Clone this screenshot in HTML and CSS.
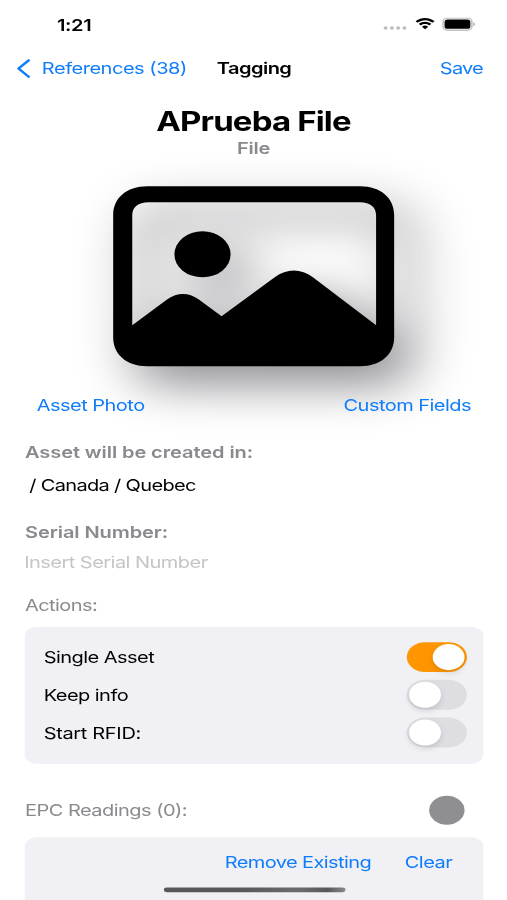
FILE: index.html
```html
<!DOCTYPE html>
<html lang="en">
<head>
<meta charset="utf-8">
<title>Tagging</title>
<link rel="stylesheet" href="styles.css">
</head>
<body>
<main class="screen">
  <header class="status">
    <span class="time">1:21</span>
    <span class="indicators">
      <svg class="cell" viewBox="0 0 20 4"><g fill="#bdbdbf"><circle cx="2" cy="2" r="1.7"/><circle cx="7.4" cy="2" r="1.7"/><circle cx="12.7" cy="2" r="1.7"/><circle cx="18" cy="2" r="1.7"/></g></svg>
      <svg class="wifi" viewBox="0 0 17 12"><path d="M8.5 2.4c2.3 0 4.5.9 6.2 2.5.1.1.3.1.4 0l1.200-1.200a.35.35 0 0 0 0-.5C11.900-1 5.100-1 .7 3.200a.35.35 0 0 0 0 .5l1.200 1.200c.1.1.3.1.4 0C4 3.300 6.200 2.400 8.500 2.400zM8.500 6.300c1.300 0 2.500.5 3.400 1.300.1.1.4.1.5 0l1.200-1.200a.35.35 0 0 0 0-.5 7.500 7.500 0 0 0-10.200 0 .35.35 0 0 0 0 .5l1.200 1.200c.1.100.4.100.5 0 .9-.800 2.100-1.300 3.400-1.300zM10.900 8.900a.35.35 0 0 1 0 .5l-2.100 2.200a.4.4 0 0 1-.6 0L6.100 9.400a.35.35 0 0 1 0-.5 3.700 3.700 0 0 1 4.800 0z"/></svg>
      <svg class="battery" viewBox="0 0 28 13" preserveAspectRatio="none"><rect x=".7" y=".7" width="24.100" height="11.600" rx="3.800" fill="none" stroke="#c2c2c4" stroke-width="1.400"/><path d="M26 4.600v4c.9-.3 1.500-1.100 1.500-2s-.6-1.700-1.500-2z" fill="#b9b9bb"/><rect x="2" y="2" width="21.500" height="9" rx="2.500"/></svg>
    </span>
  </header>

  <nav class="nav">
    <a class="back"><svg class="chevron" viewBox="0 0 12 20"><path d="M10.300 1.500 1.700 10l8.600 8.500"/></svg><span>References (38)</span></a>
    <span class="nav-title">Tagging</span>
    <a class="save">Save</a>
  </nav>

  <h1 class="title">APrueba File</h1>
  <p class="subtitle">File</p>

  <svg class="photo" viewBox="0 0 280 180" preserveAspectRatio="none">
    <path fill-rule="evenodd" d="M34 0H246C267 0 280 12 280 29V151C280 168 267 180 246 180H34C13 180 0 168 0 151V29C0 12 13 0 34 0ZM35 16C25 16 19 21 19 29V139L54 113C64 106 75 106 85 113L108 130L161 91C173 82 187 82 199 91L262 139V29C262 21 256 16 246 16Z"/>
    <ellipse cx="89" cy="68" rx="28" ry="23"/>
  </svg>

  <div class="links"><a>Asset Photo</a><a>Custom Fields</a></div>

  <p class="label created">Asset will be created in:</p>
  <p class="path">/ Canada / Quebec</p>
  <p class="label serial">Serial Number:</p>
  <p class="placeholder">Insert Serial Number</p>
  <p class="section">Actions:</p>

  <section class="card actions">
    <div class="row"><span>Single Asset</span><i class="switch on"></i></div>
    <div class="row"><span>Keep info</span><i class="switch"></i></div>
    <div class="row"><span class="rfid">Start RFID:</span><i class="switch"></i></div>
  </section>

  <div class="readings"><span>EPC Readings (0):</span><i class="dot"></i></div>

  <section class="card footer">
    <a class="remove">Remove Existing</a><a>Clear</a>
  </section>
  <div class="home"></div>
</main>
</body>
</html>
```

FILE: styles.css
```css
* { box-sizing: border-box; }
html, body { margin: 0; width: 507px; height: 900px; overflow: hidden; background: #fff; }
p, h1 { margin: 0; }

/* A 430 x 932 point canvas stretched over the window. */
.screen {
  position: relative;
  display: flex;
  flex-direction: column;
  width: 430px;
  height: 932px;
  overflow: hidden;
  transform: scale(1.17907, 0.96567);
  transform-origin: 0 0;
  font: 400 17px/22px Inter, "Liberation Sans", sans-serif;
  letter-spacing: -0.47px;
  color: #000;
  white-space: nowrap;
}
a { color: #0f7cfb; }

.status { display: flex; justify-content: space-between; align-items: center; height: 51px; padding: 0 27px 0 48.3px; }
.time { font-weight: 600; letter-spacing: -0.3px; }
.indicators { display: flex; align-items: center; margin-bottom: 1.2px; }
.cell { width: 20px; height: 4px; margin: 8.5px 7px 0 0; }
.wifi { width: 17px; height: 13px; margin-right: 5.5px; }
.battery { width: 28.5px; height: 14px; }

.nav { display: grid; grid-template-columns: 169.9px auto 1fr; align-items: center; height: 39px; padding: 0 20.4px 0 14px; }
.back { display: flex; align-items: center; gap: 9.5px; letter-spacing: -0.42px; }
.chevron { width: 12px; height: 20px; fill: none; stroke: #0f7cfb; stroke-width: 2.3; stroke-linecap: round; stroke-linejoin: round; }
.nav-title { font-weight: 600; }
.save { justify-self: end; letter-spacing: -0.7px; }

.title { margin-top: 17.5px; height: 36px; text-align: center; font-size: 28px; line-height: 36px; font-weight: 700; letter-spacing: -0.72px; }
.subtitle { height: 18px; line-height: 18px; text-align: center; font-weight: 600; color: #8a8a8e; letter-spacing: -0.2px; }

.photo { width: 238.3px; height: 186.4px; margin: 31px 0 0 95.8px; overflow: visible; filter: drop-shadow(17px 20px 23px #8e8e93); }
.links { position: relative; display: flex; justify-content: space-between; margin-top: 29.8px; padding: 0 30.5px 0 31.2px; }

.label { font-weight: 600; color: #8a8a8e; padding-left: 21.2px; letter-spacing: -0.08px; }
.created { margin-top: 26px; }
.path { margin-top: 12.6px; padding-left: 24.8px; letter-spacing: -0.58px; }
.serial { margin-top: 27px; }
.placeholder { margin-top: 8.6px; padding-left: 20.5px; color: #c5c5c7; }
.section { margin-top: 23px; padding-left: 21.2px; color: #8a8a8e; letter-spacing: -0.5px; }

.card { margin-left: 21px; width: 388.5px; background: #f1f0f5; border-radius: 10px; }
.actions { margin-top: 11.5px; height: 141.3px; padding: 11.7px 13.9px 0 16px; flex: none; }
.row { display: flex; align-items: center; justify-content: space-between; height: 39.2px; }
.rfid { letter-spacing: -0.3px; }
.switch { display: block; width: 51px; height: 31px; margin-bottom: 0.5px; padding: 2px; border-radius: 16px; background: #dedde2; }
.switch::before { content: ""; display: block; width: 27px; height: 27px; border-radius: 50%; background: #fff; box-shadow: 0 3px 6px rgba(0, 0, 0, .12); }
.switch.on { background: #ff9500; padding-left: 22px; }

.readings { display: flex; align-items: center; justify-content: space-between; height: 30px; margin-top: 33.7px; padding: 0 36px 0 21.2px; color: #8a8a8e; }
.dot { width: 30px; height: 30px; border-radius: 50%; background: #8e8e93; }

.footer { display: flex; justify-content: flex-end; gap: 28.5px; height: 65px; margin-top: 12.5px; padding: 15.2px 26px 0 0; border-radius: 10px 10px 0 0; flex: none; }
.remove { letter-spacing: -0.52px; }
.home { position: absolute; left: 138.5px; top: 918.5px; width: 154px; height: 5px; border-radius: 3px; background: linear-gradient(90deg, #58575c, #57575b 40%, #6c6b70 75%, #57575b 90%, #8a8a8e); }
```
